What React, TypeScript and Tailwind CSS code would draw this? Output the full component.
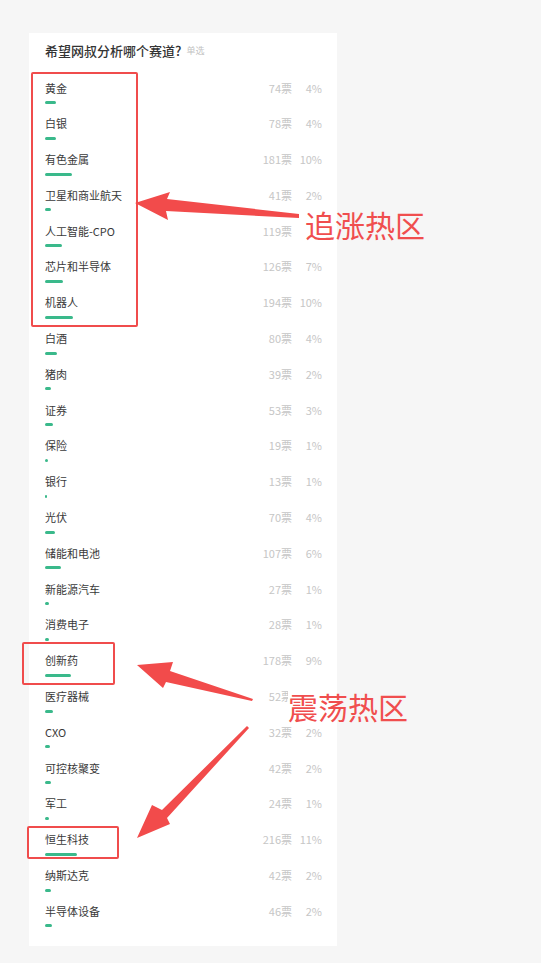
const items: [string, number, string][] = [
  ['黄金', 74, '4%'],
  ['白银', 78, '4%'],
  ['有色金属', 181, '10%'],
  ['卫星和商业航天', 41, '2%'],
  ['人工智能-CPO', 119, '6%'],
  ['芯片和半导体', 126, '7%'],
  ['机器人', 194, '10%'],
  ['白酒', 80, '4%'],
  ['猪肉', 39, '2%'],
  ['证券', 53, '3%'],
  ['保险', 19, '1%'],
  ['银行', 13, '1%'],
  ['光伏', 70, '4%'],
  ['储能和电池', 107, '6%'],
  ['新能源汽车', 27, '1%'],
  ['消费电子', 28, '1%'],
  ['创新药', 178, '9%'],
  ['医疗器械', 52, '3%'],
  ['CXO', 32, '2%'],
  ['可控核聚变', 42, '2%'],
  ['军工', 24, '1%'],
  ['恒生科技', 216, '11%'],
  ['纳斯达克', 42, '2%'],
  ['半导体设备', 46, '2%'],
]

const total = items.reduce((s, i) => s + i[1], 0)

export default function App() {
  return (
    <div
      className="relative w-[541px] h-[963px] overflow-hidden bg-[#f6f6f6] pt-[33px] pl-[29px]"
      style={{ fontFamily: '"Noto Sans CJK SC", "Noto Sans", sans-serif' }}
    >
      <div className="w-[308px] bg-white pt-[8px] pb-[7px] pl-[16px] pr-[15px]">
        <div className="h-[20px] flex items-center gap-[5px] mb-[19px]">
          <span className="text-[13px] font-medium text-[#333]">希望网叔分析哪个赛道?</span>
          <span className="text-[9px] text-[#c2c2c2]">单选</span>
        </div>

        {items.map(([name, votes, pct]) => (
          <div key={name} className="h-[35.8px]">
            <div className="h-[16px] flex items-center justify-between text-[11px] leading-none">
              <span className="text-[#3a3a3a]">{name}</span>
              <div className="flex items-center text-[#c6c6c6]">
                <span>{votes}票</span>
                <span className="w-[30px] text-right">{pct}</span>
              </div>
            </div>
            <div
              className="mt-[5px] h-[3px] rounded-full bg-[#3ab98b]"
              style={{ width: Math.max(2, (votes / total) * 276) }}
            />
          </div>
        ))}
      </div>

      {/* annotation boxes */}
      <div className="absolute left-[31px] top-[72px] w-[107px] h-[255px] border-2 border-[#f04c4c] rounded-[2px]" />
      <div className="absolute left-[22px] top-[642px] w-[93px] h-[43px] border-2 border-[#f04c4c] rounded-[2px]" />
      <div className="absolute left-[27px] top-[826px] w-[92px] h-[33px] border-2 border-[#f04c4c] rounded-[2px]" />

      <div className="absolute left-[305px] top-[209px] h-[30px] pr-[4px] text-[30px] leading-none text-[#f04e4e] bg-[linear-gradient(to_right,#fff_32px,#f6f6f6_32px)]">
        追涨热区
      </div>
      <div className="absolute left-[288px] top-[691px] h-[30px] pr-[4px] text-[30px] leading-none text-[#f04e4e] bg-[linear-gradient(to_right,#fff_49px,#f6f6f6_49px)]">
        震荡热区
      </div>

      <svg className="absolute left-0 top-0" width="541" height="963" viewBox="0 0 541 963">
        <g fill="#f24b4b">
          <polygon points="135,203 170,192 167,199 299,214 299,218 166,211 168,220" />
          <polygon points="137,665 173,662 170,671 253,699 252,701 166,682 163,688" />
          <polygon points="137,838 152,805 162,810 247,726 249,728 167,818 170,824" />
        </g>
      </svg>
    </div>
  )
}
